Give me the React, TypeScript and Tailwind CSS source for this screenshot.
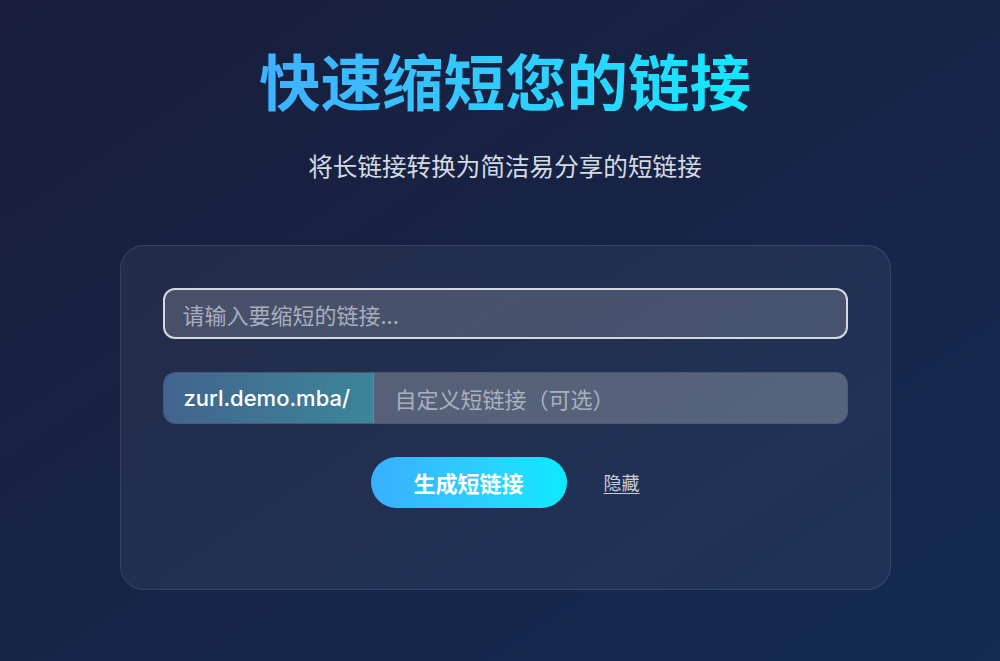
import React from "react";

export default function App() {
  const font = { fontFamily: '"Noto Sans CJK SC", "Noto Sans", sans-serif' };
  return (
    <div
      className="w-[1000px] h-[661px] overflow-hidden bg-gradient-to-br from-[#191d3b] to-[#122b52] pl-[10px]"
      style={font}
    >
      <div className="flex flex-col items-center pt-[44px]">
        <h1 className="text-[61.5px] leading-[72px] font-bold bg-gradient-to-r from-[#3fb0ff] to-[#0ee8ff] bg-clip-text text-transparent">
          快速缩短您的链接
        </h1>
        <p className="mt-[31px] text-[24.6px] leading-[36px] text-[#d5dae3]">
          将长链接转换为简洁易分享的短链接
        </p>
        <div className="mt-[62px] w-[771px] rounded-[24px] border border-white/10 bg-white/[0.05] px-[42px] pt-[42px] pb-[81px]">
          <input
            className="w-full h-[51px] rounded-[12px] border-2 border-[#d4d8e0] bg-white/[0.17] px-[18px] text-[22px] text-white placeholder:text-[#a9aebd] outline-none"
            placeholder="请输入要缩短的链接..."
            style={font}
          />
          <div className="mt-[33px] flex h-[52px] rounded-[12px] border border-white/20 overflow-hidden">
            <div
              className="w-[210px] flex items-center pl-[20px] bg-gradient-to-r from-[#42648f] to-[#3b8698] border-r border-white/20 text-[22px] font-medium text-white"
              style={{ fontFamily: 'Inter, "Noto Sans", sans-serif' }}
            >
              zurl.demo.mba/
            </div>
            <input
              className="flex-1 bg-white/[0.24] px-[21px] text-[22px] text-white placeholder:text-[#aab0bf] outline-none"
              placeholder="自定义短链接（可选）"
              style={font}
            />
          </div>
          <div className="mt-[33px] flex items-center justify-center gap-[37px]">
            <button className="w-[196px] h-[51px] rounded-full bg-gradient-to-r from-[#3aaeff] to-[#0beaff] text-[22px] font-bold text-white">
              生成短链接
            </button>
            <a className="text-[18px] text-[#c8cdd8] underline underline-offset-[3px]">隐藏</a>
          </div>
        </div>
      </div>
    </div>
  );
}
